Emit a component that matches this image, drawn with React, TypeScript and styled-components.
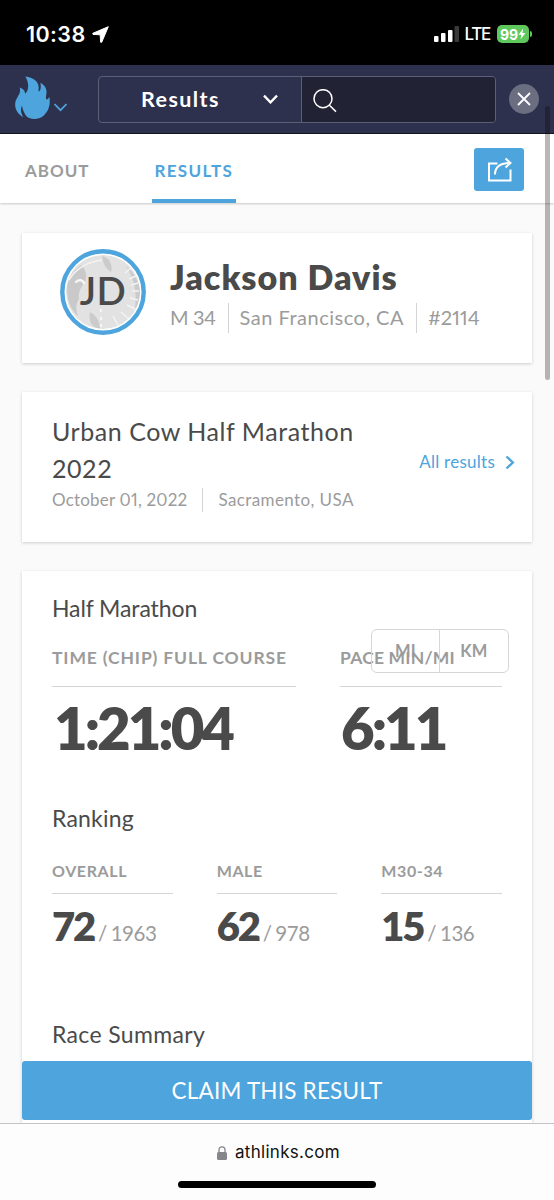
import React from "react";
import styled, { createGlobalStyle } from "styled-components";

const blue = "#4ea4dc";
const ink = "#4a4a4a";
const muted = "#9b9b9b";

const GlobalStyle = createGlobalStyle`
  * { box-sizing: border-box; }
  body { margin: 0; background: #fafafa; font-family: Lato, "Liberation Sans", sans-serif; color: ${ink}; }
  button { font: inherit; border: 0; padding: 0; background: none; }
  svg { display: block; flex: none; }
`;

const Screen = styled.div`
  position: relative;
  width: 554px;
  height: 1200px;
  overflow: hidden;
  display: flex;
  flex-direction: column;
  background: #fafafa;
`;

const StatusBar = styled.header`
  flex: none;
  height: 65px;
  padding: 3px 22px 0 26px;
  display: flex;
  align-items: center;
  justify-content: space-between;
  background: #000;
  color: #fff;
  font-family: Inter, sans-serif;
`;

const Clock = styled.div`
  display: flex;
  align-items: center;
  gap: 6px;
  font-size: 21.5px;
  font-weight: 600;
  letter-spacing: 0.4px;
`;

const Signals = styled.div`
  display: flex;
  align-items: center;
  font-size: 18px;
  font-weight: 500;
`;

const Network = styled.span`
  margin: 0 6px;
  font-size: 17px;
  letter-spacing: -1.3px;
  padding-right: 1px;
`;

const Battery = styled.span`
  display: flex;
  align-items: center;
  justify-content: center;
  width: 32px;
  height: 18px;
  border-radius: 5px;
  background: #5fc85c;
  font-size: 14px;
  font-weight: 700;
  letter-spacing: -0.2px;
`;

const BatteryTip = styled.span`
  width: 2px;
  height: 6px;
  margin-left: 1px;
  border-radius: 0 2px 2px 0;
  background: #5fc85c;
`;

const NavBar = styled.nav`
  flex: none;
  height: 69px;
  padding: 11px 15px 0;
  display: flex;
  align-items: flex-start;
  background: #2e314d;
  border-bottom: 1px solid #15161f;
`;

const Brand = styled.div`
  width: 83px;
  display: flex;
  gap: 4px;
`;

const BrandCaret = styled.span`
  padding-top: 27px;
`;

const SearchGroup = styled.div`
  width: 398px;
  height: 47px;
  display: flex;
  border: 1px solid #5c5f76;
  border-radius: 4px;
  overflow: hidden;
`;

const Scope = styled.button`
  width: 203px;
  padding: 0 23px 2px 42px;
  display: flex;
  align-items: center;
  justify-content: space-between;
  border-right: 1px solid #5c5f76;
  color: #fff;
  font-size: 21.5px;
  font-weight: 700;
  line-height: 26px;
  letter-spacing: 1.4px;
`;

const SearchField = styled.div`
  flex: 1;
  padding: 12px 11px;
  background: #212335;
`;

const CloseButton = styled.button`
  width: 30px;
  height: 30px;
  margin: 8px 0 0 13px;
  display: grid;
  place-items: center;
  border-radius: 50%;
  background: #6b6d80;
`;

const TabBar = styled.div`
  flex: none;
  height: 69px;
  padding: 0 30px 0 23px;
  display: flex;
  align-items: stretch;
  background: #fff;
  box-shadow: 0 1px 2px rgba(0, 0, 0, 0.2);
`;

const Tab = styled.button<{ $active?: boolean }>`
  height: 69px;
  margin-right: ${(p) => (p.$active ? 0 : 60)}px;
  padding: ${(p) => (p.$active ? "7px 3px 0" : "7px 2px 0")};
  border-bottom: 4px solid ${(p) => (p.$active ? blue : "transparent")};
  color: ${(p) => (p.$active ? blue : muted)};
  font-size: 17px;
  font-weight: 700;
  letter-spacing: ${(p) => (p.$active ? 1.3 : 1)}px;
`;

const ShareButton = styled.button`
  width: 50px;
  height: 43px;
  margin: 14px 0 0 auto;
  display: grid;
  place-items: center;
  border-radius: 3px;
  background: ${blue};
`;

const Content = styled.main`
  padding: 30px 22px 0;
  display: flex;
  flex-direction: column;
  gap: 29px;
`;

const Card = styled.section`
  position: relative;
  background: #fff;
  box-shadow: 0 1px 3px rgba(0, 0, 0, 0.18);
`;

const AthleteCard = styled(Card)`
  height: 130px;
  padding: 16px 38px;
  display: flex;
  gap: 24px;
`;

const Avatar = styled.div`
  position: relative;
  width: 86px;
  height: 86px;
`;

const Initials = styled.span`
  position: absolute;
  inset: 0;
  text-align: center;
  font-size: 38.5px;
  line-height: 82px;
  font-weight: 600;
  letter-spacing: 0.4px;
`;

const AthleteName = styled.h1`
  margin: 7px 0;
  font-size: 34px;
  line-height: 41px;
  height: 40px;
  font-weight: 800;
  letter-spacing: 1px;
`;

const Meta = styled.div<{ $small?: boolean }>`
  display: flex;
  height: ${(p) => (p.$small ? 24 : 30)}px;
  font-size: ${(p) => (p.$small ? 17 : 20)}px;
  line-height: ${(p) => (p.$small ? 24 : 28)}px;
  color: ${muted};
  white-space: nowrap;
`;

const MetaItem = styled.span<{ $tracking?: number }>`
  letter-spacing: ${(p) => p.$tracking ?? 0}px;
  font-feature-settings: "pnum";

  & + & {
    margin-left: 12px;
    padding-left: 11px;
    border-left: 1px solid #d4d4d4;
  }
`;

const EventMetaItem = styled(MetaItem)`
  & + & {
    margin-left: 15px;
    padding-left: 15px;
  }
`;

const EventCard = styled(Card)`
  height: 150px;
  padding: 21px 17px 0 30px;
  display: flex;
  justify-content: space-between;
`;

const EventTitle = styled.h2`
  width: 320px;
  margin: 0 0 1px;
  font-size: 25px;
  line-height: 37px;
  font-weight: 400;
  letter-spacing: 0.55px;
`;

const ResultsLink = styled.a`
  height: 24px;
  margin-top: 37px;
  display: flex;
  align-items: center;
  gap: 10px;
  font-size: 17px;
  line-height: 24px;
  letter-spacing: 0.25px;
  color: ${blue};
`;

const ResultCard = styled(Card)`
  height: 640px;
  padding: 19px 30px 0;
`;

const SectionTitle = styled.h3<{ $gap?: number; $tracking?: number }>`
  margin: ${(p) => p.$gap ?? 0}px 0 0;
  font-size: 23px;
  line-height: 37px;
  height: 36px;
  font-weight: 400;
  letter-spacing: ${(p) => p.$tracking ?? 0}px;
`;

const UnitToggle = styled.div`
  position: absolute;
  top: 58px;
  right: 23px;
  width: 138px;
  height: 44px;
  display: flex;
  border: 1px solid #d6d6d6;
  border-radius: 6px;
`;

const Unit = styled.button`
  flex: 1 1 68px;
  color: ${muted};
  font-size: 16.5px;
  font-weight: 700;
  letter-spacing: 0.3px;

  & + & {
    flex-basis: 70px;
    border-left: 1px solid #d6d6d6;
  }
`;

const SplitGrid = styled.div`
  margin-top: 20px;
  display: grid;
  grid-template-columns: 244px 162px;
  gap: 44px;
`;

const RankGrid = styled.div`
  margin-top: 23px;
  display: grid;
  grid-template-columns: repeat(3, 1fr);
  gap: 44px;
`;

const Label = styled.div<{ $small?: boolean; $tracking?: number }>`
  padding-bottom: ${(p) => (p.$small ? 10 : 16)}px;
  border-bottom: 1px solid #d4d4d4;
  color: ${muted};
  font-size: ${(p) => (p.$small ? 16 : 17.5)}px;
  line-height: 24px;
  font-weight: 700;
  letter-spacing: ${(p) => p.$tracking ?? 0.6}px;
  white-space: nowrap;
`;

const BigValue = styled.div<{ $indent?: number }>`
  margin-top: 7px;
  padding-left: ${(p) => p.$indent ?? 0}px;
  font-size: 58px;
  line-height: 67px;
  height: 64px;
  font-weight: 800;
  letter-spacing: -3px;
`;

const RankValue = styled.div`
  margin-top: 8px;
  height: 47px;
  display: flex;
  align-items: baseline;
  gap: 4px;
  line-height: 48px;
`;

const Place = styled.strong`
  font-size: 40px;
  font-weight: 800;
  letter-spacing: -2.2px;
`;

const Field = styled.span`
  font-size: 20.5px;
  letter-spacing: -0.45px;
  word-spacing: -1px;
  color: ${muted};
`;

const BottomBar = styled.footer`
  position: absolute;
  left: 0;
  right: 0;
  bottom: 0;
`;

const ClaimButton = styled.button`
  display: block;
  width: 510px;
  height: 59px;
  margin: 0 22px 3px;
  border-radius: 3px;
  background: ${blue};
  color: #fff;
  font-size: 22.5px;
  letter-spacing: 0.2px;
`;

const BrowserBar = styled.div`
  height: 77px;
  padding-top: 16px;
  display: flex;
  flex-direction: column;
  align-items: center;
  gap: 16px;
  border-top: 1px solid #c4c4c6;
  background: #fdfdfd;
  color: #111;
`;

const Address = styled.div`
  display: flex;
  align-items: center;
  gap: 8px;
  padding-left: 3px;
  font-family: Inter, sans-serif;
  font-size: 17px;
  line-height: 25px;
  letter-spacing: 0.3px;
`;

const HomeIndicator = styled.div`
  width: 198px;
  height: 7px;
  border-radius: 4px;
  background: #000;
`;

const ScrollThumb = styled.div`
  position: absolute;
  top: 106px;
  right: 4px;
  width: 5px;
  height: 274px;
  border-radius: 3px;
  background: rgba(0, 0, 0, 0.28);
`;

const ranks = [
  { label: "OVERALL", place: "72", field: "1963" },
  { label: "MALE", place: "62", field: "978" },
  { label: "M30-34", place: "15", field: "136" },
];

const Flame = () => (
  <svg width="35" height="44" viewBox="44 230 105 131" fill={blue}>
    <path d="M75 231C98 233 115 246 115 264C115 270 114 275 116 276C121 272 123 262 120 250C133 257 141 269 138 284C137 291 136 295 138 300C142 300 145 297 147 292C151 312 146 334 131 347C117 362 86 362 76 347C69 336 66 327 65 318C60 327 61 341 69 353C51 343 42 326 45 308C48 292 64 282 58 264C68 267 75 274 74 283C85 276 88 252 75 231Z" />
  </svg>
);

const AvatarArt = () => (
  <svg width="86" height="86" viewBox="0 0 86 86">
    <circle cx="43" cy="43" r="37" fill="#e2e2e2" />
    <path d="M7 38C9 27 15 19 22 16C26 22 27 27 25 33C21 38 18 43 19 50C15 56 16 61 18 67C10 60 7 51 7 38Z" fill="#c9c9c9" />
    <path d="M42 7C50 9 53 16 51 23C46 20 43 15 42 7ZM30 63C37 67 40 73 40 80C32 78 28 73 30 63ZM66 17C75 24 80 35 80 43C80 51 78 56 75 60C77 42 74 29 66 17Z" fill="#cbcbcb" />
    <path d="M9 31C16 19 28 13 42 11M65 24L71 19M69 30L76 27M71 36L78 34M72 42H79M70 49L78 51M67 56L75 60M61 63L69 70M53 67L58 76" fill="none" stroke="#f3f3f3" strokeWidth="1.5" />
    <path d="M16 33C19 30 23 31 24 34M41 61V62M41 69V70M41 76V77" fill="none" stroke="#f6f6f6" strokeWidth="2.4" strokeLinecap="round" />
    <circle cx="43" cy="43" r="38" fill="none" stroke="#fff" strokeWidth="1.5" />
    <circle cx="43" cy="43" r="40.7" fill="none" stroke={blue} strokeWidth="4.4" />
  </svg>
);

export default function App() {
  return (
    <Screen>
      <GlobalStyle />
      <StatusBar>
        <Clock>
          10:38
          <svg width="17" height="17" viewBox="0 0 17 17" fill="#fff" stroke="#fff" strokeWidth="1" strokeLinejoin="round">
            <path d="M16.3 .7L.8 7.3L1 8.4L8.2 8.8L8.6 16.2L9.7 16.3Z" />
          </svg>
        </Clock>
        <Signals>
          <svg width="25" height="16" viewBox="0 0 25 16" fill="#fff">
            <rect x="0" y="10" width="4.5" height="6" rx="1" />
            <rect x="7" y="7" width="4.5" height="9" rx="1" />
            <rect x="14" y="4" width="4.5" height="12" rx="1" />
            <rect x="20.5" y="0" width="4.5" height="16" rx="1" fill="#3a3a3a" />
          </svg>
          <Network>LTE</Network>
          <Battery>
            99
            <svg width="8" height="12" viewBox="0 0 8 12" fill="#fff">
              <path d="M5.2 .5L.6 6.8H3.4L2.5 11.5L7.4 4.9H4.4Z" />
            </svg>
          </Battery>
          <BatteryTip />
        </Signals>
      </StatusBar>

      <NavBar>
        <Brand>
          <Flame />
          <BrandCaret>
            <svg width="13" height="9" viewBox="0 0 13 9" fill="none" stroke={blue} strokeWidth="1.7">
              <path d="M.5 1L6.5 7.2L12.5 1" />
            </svg>
          </BrandCaret>
        </Brand>
        <SearchGroup>
          <Scope>
            Results
            <svg width="15" height="10" viewBox="0 0 15 10" fill="none" stroke="#fff" strokeWidth="2.3">
              <path d="M1 1.6L7.5 8.4L14 1.6" />
            </svg>
          </Scope>
          <SearchField>
            <svg width="24" height="24" viewBox="0 0 24 24" fill="none" stroke="#fff" strokeWidth="1.5">
              <circle cx="10" cy="9.7" r="9" />
              <path d="M16.4 16.2L23 22.6" />
            </svg>
          </SearchField>
        </SearchGroup>
        <CloseButton aria-label="Close">
          <svg width="14" height="14" viewBox="0 0 14 14" stroke="#fff" strokeWidth="1.8">
            <path d="M1 1L13 13M13 1L1 13" />
          </svg>
        </CloseButton>
      </NavBar>

      <TabBar>
        <Tab>ABOUT</Tab>
        <Tab $active>RESULTS</Tab>
        <ShareButton aria-label="Share">
          <svg width="26" height="26" viewBox="0 0 26 26" fill="none" stroke="#fff" strokeWidth="2">
            <path d="M11.5 6.5H3V23.5H24.5V12.5M9 17.5C9 10 14 6 24 6M19.5 1.5L24.5 6L19.5 10.5" />
          </svg>
        </ShareButton>
      </TabBar>

      <Content>
        <AthleteCard>
          <Avatar>
            <AvatarArt />
            <Initials>JD</Initials>
          </Avatar>
          <div>
            <AthleteName>Jackson Davis</AthleteName>
            <Meta>
              <MetaItem $tracking={-0.4}>M 34</MetaItem>
              <MetaItem $tracking={0.5}>San Francisco, CA</MetaItem>
              <MetaItem $tracking={-0.1}>#2114</MetaItem>
            </Meta>
          </div>
        </AthleteCard>

        <EventCard>
          <div>
            <EventTitle>Urban Cow Half Marathon 2022</EventTitle>
            <Meta $small>
              <EventMetaItem $tracking={0.2}>October 01, 2022</EventMetaItem>
              <EventMetaItem $tracking={0.4}>Sacramento, USA</EventMetaItem>
            </Meta>
          </div>
          <ResultsLink>
            All results
            <svg width="10" height="15" viewBox="0 0 10 15" fill="none" stroke={blue} strokeWidth="2.4">
              <path d="M1.5 1.5L7.8 7.5L1.5 13.5" />
            </svg>
          </ResultsLink>
        </EventCard>

        <ResultCard>
          <SectionTitle $tracking={-0.1}>Half Marathon</SectionTitle>
          <UnitToggle>
            <Unit>MI</Unit>
            <Unit>KM</Unit>
          </UnitToggle>
          <SplitGrid>
            <div>
              <Label $tracking={0.85}>TIME (CHIP) FULL COURSE</Label>
              <BigValue $indent={2}>1:21:04</BigValue>
            </div>
            <div>
              <Label $tracking={0.2}>PACE MIN/MI</Label>
              <BigValue $indent={1}>6:11</BigValue>
            </div>
          </SplitGrid>
          <SectionTitle $gap={42} $tracking={0.2}>Ranking</SectionTitle>
          <RankGrid>
            {ranks.map((r) => (
              <div key={r.label}>
                <Label $small>{r.label}</Label>
                <RankValue>
                  <Place>{r.place}</Place>
                  <Field>/ {r.field}</Field>
                </RankValue>
              </div>
            ))}
          </RankGrid>
          <SectionTitle $gap={67} $tracking={0.35}>Race Summary</SectionTitle>
        </ResultCard>
      </Content>

      <BottomBar>
        <ClaimButton>CLAIM THIS RESULT</ClaimButton>
        <BrowserBar>
          <Address>
            <svg width="10" height="14" viewBox="0 0 10 14">
              <rect x="0" y="6" width="10" height="8" rx="1.5" fill="#85858a" />
              <path d="M2 6.5V3.8C2 -.2 8 -.2 8 3.8V6.5" fill="none" stroke="#85858a" strokeWidth="1.3" />
            </svg>
            athlinks.com
          </Address>
          <HomeIndicator />
        </BrowserBar>
      </BottomBar>
      <ScrollThumb />
    </Screen>
  );
}
